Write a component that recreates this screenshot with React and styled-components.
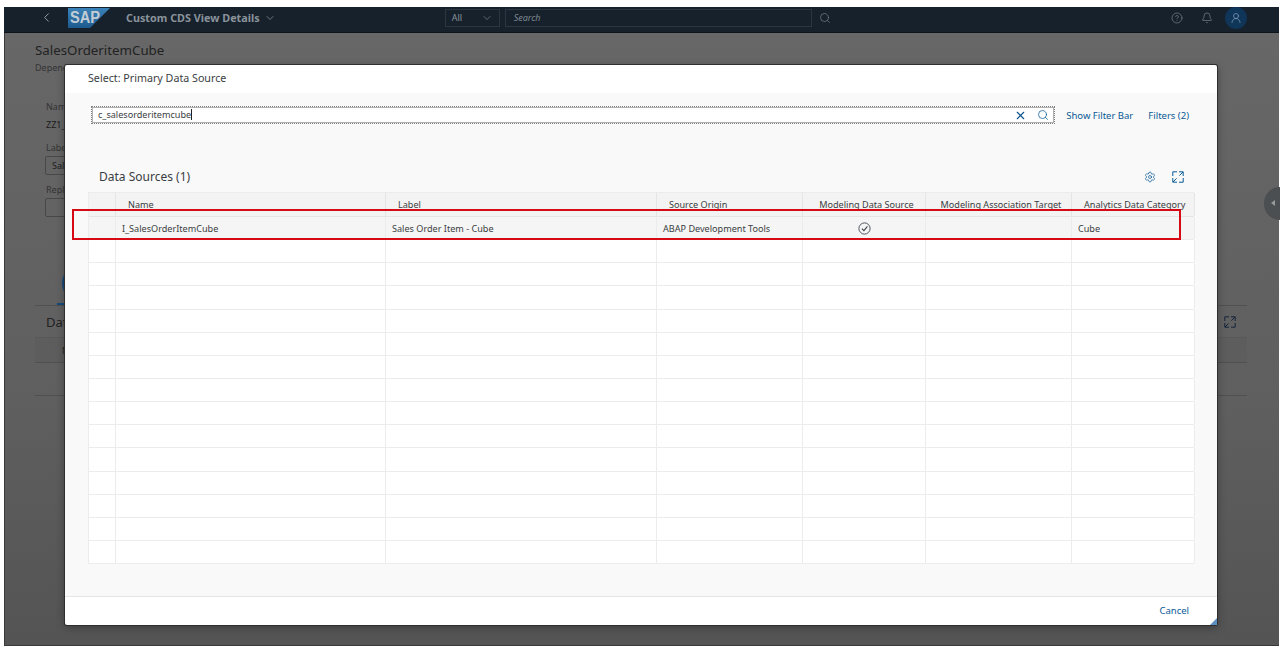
import React from 'react';
import styled, { createGlobalStyle } from 'styled-components';
import { Bell, ChevronDown, ChevronLeft, CircleHelp, Search, Settings, UserRound, X } from 'lucide-react';

const COLUMNS = [
  { title: '', width: 27 },
  { title: 'Name', width: 270, value: 'I_SalesOrderItemCube' },
  { title: 'Label', width: 271, value: 'Sales Order Item - Cube' },
  { title: 'Source Origin', width: 146, value: 'ABAP Development Tools' },
  { title: 'Modeling Data Source', width: 123, centered: true, check: true },
  { title: 'Modeling Association Target', width: 146, centered: true },
  { title: 'Analytics Data Category', width: 123, value: 'Cube' },
];

const EMPTY_ROWS = Array.from({ length: 14 }, (_, i) => i);

function ExpandIcon({ size = 12, color = '#0a5a96' }) {
  return (
    <svg width={size} height={size} viewBox="0 0 12 12" fill="none" stroke={color} strokeWidth="1">
      <path d="M5 .8H.8V5M7 11.2h4.2V7" />
      <path d="M7 .8h4.2V5M11 1 7.4 4.6M.8 7v4.2H5M1 11l3.6-3.6" />
    </svg>
  );
}

function CheckIcon() {
  return (
    <svg width="13" height="13" viewBox="0 0 13 13" fill="none" stroke="#3c4650">
      <circle cx="6.5" cy="6.5" r="5.6" strokeWidth="0.9" />
      <path d="M3.9 6.6 5.9 8.6 9.4 4.3" strokeWidth="1.1" />
    </svg>
  );
}

function SapLogo() {
  return (
    <svg width="42" height="20" viewBox="0 0 42 20">
      <defs>
        <linearGradient id="sapBlue" x1="0" y1="0" x2="0" y2="1">
          <stop offset="0" stopColor="#3a82b8" />
          <stop offset="1" stopColor="#1d5a8e" />
        </linearGradient>
      </defs>
      <polygon points="0,0 42,0 22,20 0,20" fill="url(#sapBlue)" />
      <text
        x="2"
        y="15"
        textLength="30"
        lengthAdjust="spacingAndGlyphs"
        fontFamily="Liberation Sans, sans-serif"
        fontSize="16"
        fontWeight="700"
        fill="#c2ccd5"
      >
        SAP
      </text>
    </svg>
  );
}

export default function App() {
  return (
    <>
      <GlobalStyle />
      <Frame>
        <ShellBar>
          <BackButton><ChevronLeft size={15} strokeWidth={1.5} /></BackButton>
          <SapLogo />
          <ShellTitle>Custom CDS View Details</ShellTitle>
          <ChevronDown size={12} color="#8a939b" strokeWidth={1.5} />
          <ShellSearch>
            <ScopeSelect>
              All
              <ChevronDown size={12} color="#8a939b" strokeWidth={1.2} />
            </ScopeSelect>
            <SearchField>Search</SearchField>
            <Search size={12} color="#7d8790" strokeWidth={1.3} />
          </ShellSearch>
          <ShellActions>
            <CircleHelp size={12} color="#7d8790" strokeWidth={1.3} />
            <Bell size={12} color="#7d8790" strokeWidth={1.3} />
            <Avatar><UserRound size={12} color="#7fa0bd" strokeWidth={1.4} /></Avatar>
          </ShellActions>
        </ShellBar>

        <Page>
          <PageTitle>SalesOrderitemCube</PageTitle>
          <PageSubtitle>Dependencies</PageSubtitle>
          <FormLabel $top={27}>Name</FormLabel>
          <FormValue>ZZ1_</FormValue>
          <FormLabel $top={11}>Label</FormLabel>
          <FormInput>Sales</FormInput>
          <FormLabel $top={9}>Replaces</FormLabel>
          <FormInput />
          <TabBar>
            <TabItem><TabCircle /></TabItem>
          </TabBar>
          <SectionHead>
            Data Sources
            <ExpandIcon size={12} color="#14263c" />
          </SectionHead>
          <BackRow $height={25} $head>N</BackRow>
          <BackRow $height={33} />
        </Page>

        <SideHandle />

        <Dialog>
          <DialogHeader>Select: Primary Data Source</DialogHeader>
          <DialogBody>
            <SearchRow>
              <SearchInput>
                <SearchText>c_salesorderitemcube<Caret /></SearchText>
                <X size={13} color="#0a4f8a" strokeWidth={2} />
                <Search size={12} color="#0a5a96" strokeWidth={1.5} />
              </SearchInput>
              <LinkButton>Show Filter Bar</LinkButton>
              <LinkButton>Filters (2)</LinkButton>
            </SearchRow>

            <TableToolbar>
              <TableTitle>Data Sources (1)</TableTitle>
              <Settings size={12} color="#0a5a96" strokeWidth={1.4} />
              <ExpandIcon />
            </TableToolbar>

            <Table>
              <HeaderRow>
                {COLUMNS.map((c) => (
                  <HeaderCell key={c.title} $width={c.width} $centered={c.centered}>{c.title}</HeaderCell>
                ))}
              </HeaderRow>
              <DataRow $selected>
                {COLUMNS.map((c) => (
                  <DataCell key={c.title} $width={c.width} $centered={c.centered}>
                    {c.check ? <CheckIcon /> : c.value}
                  </DataCell>
                ))}
              </DataRow>
              {EMPTY_ROWS.map((r) => (
                <DataRow key={r}>
                  {COLUMNS.map((c) => <DataCell key={c.title} $width={c.width} />)}
                </DataRow>
              ))}
            </Table>
          </DialogBody>
          <DialogFooter>
            <LinkButton>Cancel</LinkButton>
          </DialogFooter>
          <ResizeGrip />
        </Dialog>

        <Highlight />
      </Frame>
    </>
  );
}

const GlobalStyle = createGlobalStyle`
  html, body {
    margin: 0;
    height: 650px;
    overflow: hidden;
    background: #fff;
  }
  * {
    box-sizing: border-box;
  }
  body {
    font-family: "Noto Sans", "Liberation Sans", sans-serif;
  }
`;

const Frame = styled.div`
  position: relative;
  height: 650px;
  padding: 7px 1px 4px 4px;
  display: flex;
  flex-direction: column;
`;

const ShellBar = styled.header`
  height: 26px;
  flex: none;
  display: flex;
  align-items: center;
  padding: 0 0 4px 35px;
  background: #17212c;
  border-bottom: 1px solid #0e141b;
  svg {
    flex: none;
  }
`;

const BackButton = styled.span`
  width: 29px;
  display: flex;
  color: #9aa2a9;
`;

const ShellTitle = styled.span`
  margin: 0 4px 0 16px;
  font-size: 10.8px;
  font-weight: 700;
  color: #8a939b;
  white-space: nowrap;
`;

const ShellSearch = styled.div`
  margin-left: 169px;
  display: flex;
  align-items: center;
  gap: 5px;
  > svg {
    margin-left: 2px;
  }
`;

const ScopeSelect = styled.div`
  width: 55px;
  height: 18px;
  padding: 0 6px;
  display: flex;
  align-items: center;
  justify-content: space-between;
  border: 1px solid #2a3642;
  font-size: 9px;
  color: #8a939b;
`;

const SearchField = styled.div`
  width: 307px;
  height: 18px;
  padding-left: 8px;
  line-height: 16px;
  border: 1px solid #2a3642;
  font-size: 9px;
  font-style: italic;
  color: #7d8790;
`;

const ShellActions = styled.div`
  margin-left: auto;
  margin-right: 32px;
  display: flex;
  align-items: center;
  gap: 18px;
`;

const Avatar = styled.span`
  width: 22px;
  height: 22px;
  margin-left: -6px;
  display: flex;
  align-items: center;
  justify-content: center;
  border-radius: 50%;
  background: #0f3559;
`;

const Page = styled.main`
  flex: 1;
  padding: 8px 32px 0 30px;
  background: linear-gradient(#676767, #5f5f5f 60%, #545454);
  border-left: 1px solid #3a3a3a;
  border-bottom: 1px solid #3a3a3a;
  color: #262626;
`;

const PageTitle = styled.h1`
  margin: 0;
  font-size: 13.3px;
  font-weight: 400;
  line-height: 18px;
  color: #222;
`;

const PageSubtitle = styled.div`
  margin-top: 3px;
  font-size: 9px;
  line-height: 12px;
  color: #333;
`;

const FormLabel = styled.div`
  margin: ${(p) => p.$top}px 0 0 11px;
  font-size: 9px;
  line-height: 12px;
  color: #333;
`;

const FormValue = styled.div`
  margin: 6px 0 0 11px;
  font-size: 9px;
  line-height: 12px;
  color: #1c1c1c;
`;

const FormInput = styled.div`
  width: 170px;
  height: 19px;
  margin: 2px 0 0 10px;
  padding-left: 6px;
  font-size: 9px;
  line-height: 17px;
  color: #1c1c1c;
  border: 1px solid #484848;
  border-radius: 2px;
`;

const TabBar = styled.div`
  height: 89px;
  display: flex;
  align-items: flex-end;
  padding-left: 22px;
  border-bottom: 1px solid #505050;
`;

const TabItem = styled.div`
  width: 60px;
  padding: 0 0 1px 5px;
  border-bottom: 2px solid #164a7c;
`;

const TabCircle = styled.div`
  width: 38px;
  height: 38px;
  border-radius: 50%;
  background: #164a7c;
`;

const SectionHead = styled.div`
  height: 32px;
  padding: 0 11px;
  display: flex;
  align-items: center;
  justify-content: space-between;
  font-size: 13px;
  color: #222;
  border-bottom: 1px solid #585858;
`;

const BackRow = styled.div`
  height: ${(p) => p.$height}px;
  padding-left: 27px;
  font-size: 9px;
  line-height: ${(p) => p.$height}px;
  color: #222;
  background: ${(p) => (p.$head ? 'rgba(0, 0, 0, 0.03)' : 'transparent')};
  border-bottom: 1px solid #505050;
`;

const SideHandle = styled.div`
  position: absolute;
  top: 187px;
  right: 0;
  width: 16px;
  height: 33px;
  border-radius: 17px 0 0 17px;
  background: #4b4f52;
  &::after {
    content: '';
    position: absolute;
    left: 7px;
    top: 13px;
    border: 3px solid transparent;
    border-right: 4px solid #9a9a9a;
    border-left: 0;
  }
`;

const Dialog = styled.section`
  position: absolute;
  top: 65px;
  left: 65px;
  width: 1152px;
  height: 560px;
  display: flex;
  flex-direction: column;
  background: #fff;
  border-radius: 2px;
  box-shadow: 0 0 0 1px #2e2e2e, 0 2px 10px rgba(0, 0, 0, 0.35);
`;

const DialogHeader = styled.div`
  height: 28px;
  flex: none;
  padding-left: 23px;
  font-size: 10.7px;
  line-height: 27px;
  color: #3a3e42;
`;

const DialogBody = styled.div`
  flex: 1;
  padding: 14px 23px 0;
  background: #f9f9f9;
`;

const SearchRow = styled.div`
  display: flex;
  align-items: center;
  gap: 15px;
  padding-left: 4px;
  padding-right: 5px;
  height: 16px;
`;

const SearchInput = styled.div`
  width: 963px;
  height: 16px;
  margin-right: -3px;
  padding: 0 4px 0 5px;
  display: flex;
  align-items: center;
  gap: 10px;
  background: #fff;
  border: 1px solid #b0b0b0;
  outline: 1px dotted #808080;
`;

const SearchText = styled.span`
  flex: 1;
  font-size: 9.1px;
  line-height: 14px;
  color: #3a3e42;
`;

const Caret = styled.span`
  display: inline-block;
  width: 1px;
  height: 11px;
  vertical-align: -2px;
  background: #222;
`;

const LinkButton = styled.span`
  font-size: 9.5px;
  color: #0a5a96;
  white-space: nowrap;
`;

const TableToolbar = styled.div`
  height: 69px;
  padding: 48px 10px 0 11px;
  display: flex;
  align-items: flex-start;
  gap: 16px;
`;

const TableTitle = styled.h2`
  flex: 1;
  margin: -3px 0 0;
  font-size: 12px;
  font-weight: 400;
  line-height: 18px;
  color: #3a3e42;
`;

const Table = styled.div`
  width: 1106px;
  background: #fff;
  border-top: 1px solid #ececec;
  border-left: 1px solid #ececec;
`;

const HeaderRow = styled.div`
  height: 24px;
  display: flex;
  background: #f3f3f3;
  border-bottom: 1px solid #e5e5e5;
`;

const HeaderCell = styled.div`
  width: ${(p) => p.$width}px;
  height: 100%;
  flex: none;
  padding: ${(p) => (p.$centered ? '5px 0 0 5px' : '5px 0 0 12px')};
  text-align: ${(p) => (p.$centered ? 'center' : 'left')};
  font-size: 9.1px;
  line-height: 14px;
  color: #3a3e42;
  white-space: nowrap;
  border-right: 1px solid #e5e5e5;
`;

const DataRow = styled.div`
  height: 23.15px;
  display: flex;
  background: ${(p) => (p.$selected ? '#f5f5f5' : '#fff')};
  border-bottom: 1px solid #ececec;
`;

const DataCell = styled.div`
  width: ${(p) => p.$width}px;
  height: 100%;
  flex: none;
  display: flex;
  align-items: center;
  justify-content: ${(p) => (p.$centered ? 'center' : 'flex-start')};
  padding-left: ${(p) => (p.$centered ? 0 : 6)}px;
  font-size: 9.1px;
  color: #3a3e42;
  white-space: nowrap;
  border-right: 1px solid #ececec;
`;

const DialogFooter = styled.footer`
  height: 29px;
  flex: none;
  padding: 4px 28px 0 0;
  text-align: right;
  border-top: 1px solid #e5e5e5;
  line-height: 14px;
`;

const ResizeGrip = styled.span`
  position: absolute;
  right: 0;
  bottom: 0;
  width: 7px;
  height: 7px;
  clip-path: polygon(100% 0, 100% 100%, 0 100%);
  background: #5f8fc0;
`;

const Highlight = styled.div`
  position: absolute;
  top: 209px;
  left: 72px;
  width: 1109px;
  height: 31px;
  border: 2px solid #d60a14;
  pointer-events: none;
`;
